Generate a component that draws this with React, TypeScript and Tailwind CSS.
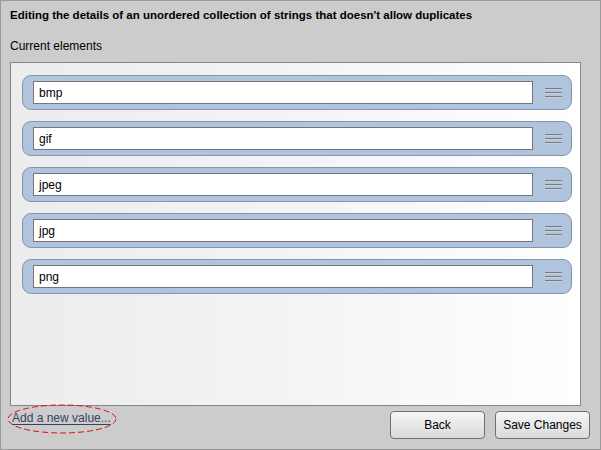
import React from "react";

const items = ["bmp", "gif", "jpeg", "jpg", "png"];

function Grip() {
  return (
    <svg width="17" height="10" viewBox="0 0 17 10" className="block">
      <rect x="0" y="0" width="17" height="1" fill="#7b7b7b" />
      <rect x="0" y="1" width="17" height="1" fill="#c4cfdd" />
      <rect x="0" y="4" width="17" height="1" fill="#7b7b7b" />
      <rect x="0" y="5" width="17" height="1" fill="#c4cfdd" />
      <rect x="0" y="8" width="17" height="1" fill="#7b7b7b" />
      <rect x="0" y="9" width="17" height="1" fill="#c4cfdd" />
    </svg>
  );
}

export default function App() {
  return (
    <div className="w-[601px] h-[450px] bg-[#cccccc] border border-[#9a9a9a] flex flex-col font-['Liberation_Sans',Arial,sans-serif] text-black relative overflow-hidden">
      <div className="pl-[9px] pt-[7px] text-[11.5px] font-bold leading-[14px]">
        Editing the details of an unordered collection of strings that doesn't allow duplicates
      </div>
      <div className="pl-[9px] mt-[17px] text-[12px] leading-[14px]">Current elements</div>
      <div className="ml-[9px] mt-[9px] w-[571px] h-[344px] border border-[#858585] bg-gradient-to-r from-[#ececec] via-[#f4f4f4] to-[#ffffff] flex flex-col gap-[11px] pt-[12px] pl-[11px]">
        {items.map((it) => (
          <div
            key={it}
            className="h-[35px] w-[550px] rounded-[9px] border border-[#8595ad] bg-[#b0c4de] flex items-center pl-[10px] shrink-0"
          >
            <div className="w-[500px] h-[23px] border border-[#767676] bg-white flex items-center pl-[5px] text-[12px]">
              {it}
            </div>
            <div className="ml-[12px]">
              <Grip />
            </div>
          </div>
        ))}
      </div>
      <div className="flex items-start mt-[5px]">
        <div className="ml-[11px] mt-[0px] text-[12px] leading-[14px] text-[#34435e] underline underline-offset-[2px] relative">
          Add a new value...
        </div>
        <div className="ml-auto mr-[10px] flex gap-[10px]">
          <button className="w-[95px] h-[28px] rounded-[4px] border border-[#707070] bg-gradient-to-b from-[#f6f6f6] to-[#dadada] text-[12px]">
            Back
          </button>
          <button className="w-[95px] h-[28px] rounded-[4px] border border-[#707070] bg-gradient-to-b from-[#f6f6f6] to-[#dadada] text-[12px]">
            Save Changes
          </button>
        </div>
      </div>
      <svg className="absolute left-[6px] top-[403px]" width="112" height="31" viewBox="0 0 112 31">
        <ellipse cx="55" cy="15" rx="54" ry="14" fill="none" stroke="#e0101a" strokeWidth="1" strokeDasharray="6 3" />
      </svg>
    </div>
  );
}
